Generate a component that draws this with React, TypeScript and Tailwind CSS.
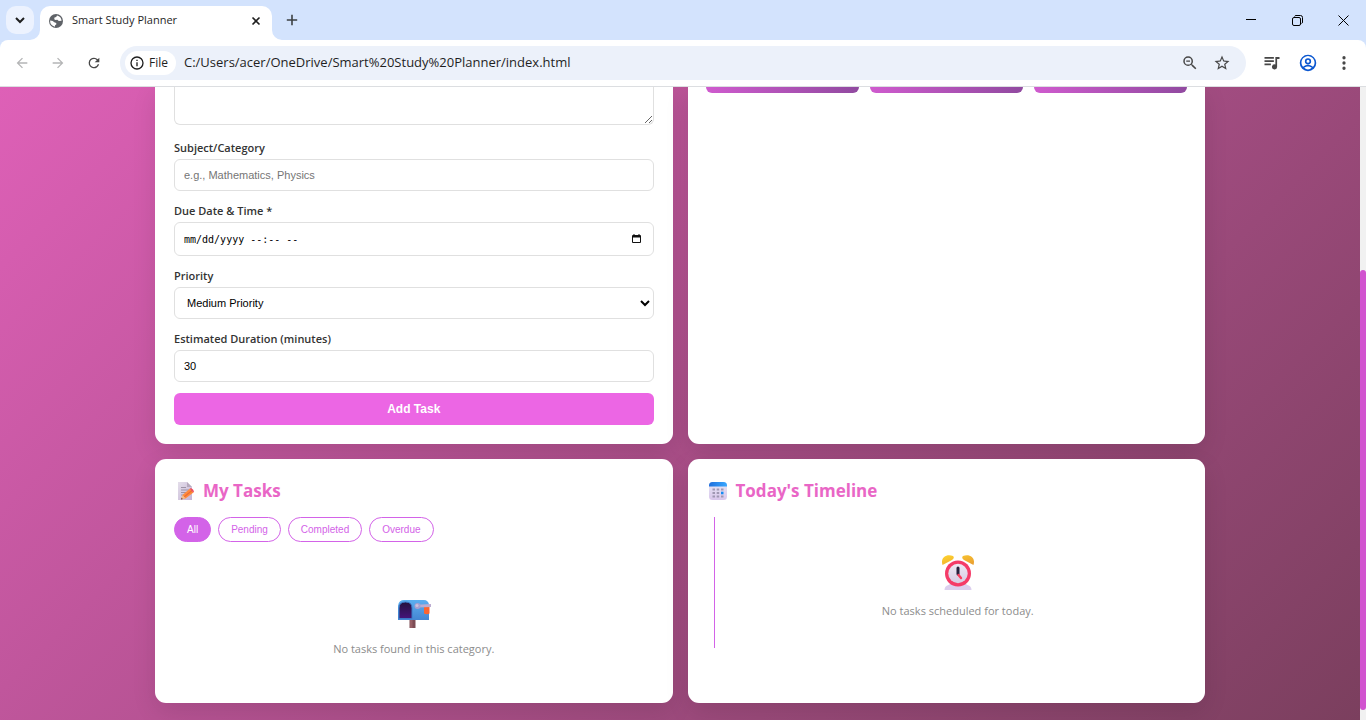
import React, { useState } from "react";

type IconProps = { d: string; size?: string; className?: string };

function MaterialIcon({ d, size = "size-4", className = "" }: IconProps) {
  return (
    <svg viewBox="0 0 24 24" className={`${size} ${className}`} fill="currentColor" aria-hidden="true">
      <path d={d} />
    </svg>
  );
}

const icons = {
  back: "M20 11H7.83l5.59-5.59L12 4l-8 8 8 8 1.41-1.41L7.83 13H20v-2z",
  forward: "M12 4l-1.41 1.41L16.17 11H4v2h12.17l-5.58 5.59L12 20l8-8z",
  reload:
    "M17.65 6.35A7.96 7.96 0 0 0 12 4a8 8 0 1 0 7.73 10h-2.08A6 6 0 1 1 12 6c1.66 0 3.14.69 4.22 1.78L13 11h7V4l-2.35 2.35z",
  info: "M11 7h2v2h-2zm0 4h2v6h-2zm1-9a10 10 0 1 0 0 20 10 10 0 0 0 0-20zm0 18a8 8 0 1 1 0-16 8 8 0 0 1 0 16z",
  zoomOut:
    "M15.5 14h-.79l-.28-.27A6.47 6.47 0 0 0 16 9.5 6.5 6.5 0 1 0 9.5 16c1.61 0 3.09-.59 4.23-1.57l.27.28v.79l5 4.99L20.49 19l-4.99-5zm-6 0a4.5 4.5 0 1 1 0-9 4.5 4.5 0 0 1 0 9zM7 8.6h5v1.8H7z",
  star: "M22 9.24l-7.19-.62L12 2 9.19 8.63 2 9.24l5.46 4.73L5.82 21 12 17.27 18.18 21l-1.63-7.03L22 9.24zM12 15.4l-3.76 2.27 1-4.28-3.32-2.88 4.38-.38L12 6.1l1.71 4.04 4.38.38-3.32 2.88 1 4.28L12 15.4z",
  queue:
    "M14.5 4H2v2.2h12.5V4zm0 4.4H2v2.2h12.5V8.400zM2 15h8.500v-2.200H2V15zM16.500 4v9.900A3.400 3.400 0 1 0 18.800 17V6.500H22V4h-5.500z",
  account:
    "M12 1a11 11 0 1 0 0 22 11 11 0 0 0 0-22zM7.100 18.400c.4-.9 3-1.800 4.900-1.800s4.500.9 4.900 1.800A8.500 8.500 0 0 1 12 20.600a8.500 8.500 0 0 1-4.900-2.200zm11.500-1.300c-1.600-1.900-5.100-2.800-6.600-2.800s-5 .9-6.600 2.800A8.700 8.700 0 1 1 20.700 12c0 1.900-.8 3.700-2.100 5.100zM12 5.500a4.200 4.200 0 1 0 0 8.400 4.200 4.200 0 0 0 0-8.400zm0 6.200a2 2 0 1 1 0-4 2 2 0 0 1 0 4z",
  dots: "M12 7.200a2.200 2.200 0 1 0 0-4.400 2.200 2.200 0 0 0 0 4.400zm0 2.600a2.200 2.200 0 1 0 0 4.400 2.200 2.200 0 0 0 0-4.400zm0 7a2.200 2.200 0 1 0 0 4.400 2.200 2.200 0 0 0 0-4.400z",
};

function Globe() {
  return (
    <svg viewBox="0 0 16 16" className="size-4" aria-hidden="true">
      <circle cx="8" cy="8" r="7" fill="#5f6368" />
      <path
        d="M9 2.4 8.2 4l-1.7.6-.3 1.600 1.300.7 1.800-.2 1.500 1.200 2.800-.1A6 6 0 0 0 9 2.4zM2.100 7.600l2.600.3 1.600 1.400 1.900.6.2 1.400-1.300.9-.2 1.500A6 6 0 0 1 2.100 7.600z"
        fill="#fff"
      />
    </svg>
  );
}

function BrowserChrome() {
  return (
    <header className="shrink-0 bg-[#d3e3fd] text-[#1f1f1f]">
      <div className="flex h-10 items-start">
        <button aria-label="Search tabs" className="ml-1.5 mt-1.5 grid size-7 place-items-center rounded-[10px] bg-[#ecf2fe]">
          <svg viewBox="0 0 10 10" className="size-2.5" fill="none" stroke="#1f1f1f" strokeWidth="2" aria-hidden="true">
            <path d="M1 3l4 4 4-4" />
          </svg>
        </button>
        <div className="relative ml-1.5 mt-1.5 flex h-[34px] w-[232px] items-center rounded-t-[10px] bg-white pb-[5px] pl-2 pr-2">
          <Globe />
          <span className="ml-2 flex-1 whitespace-nowrap text-[11px]">Smart Study Planner</span>
          <button aria-label="Close tab" className="grid size-4 place-items-center">
            <svg viewBox="0 0 10 10" className="size-2.5" stroke="#1f1f1f" strokeWidth="1.6" aria-hidden="true">
              <path d="M1.500 1.500l7 7m0-7l-7 7" />
            </svg>
          </button>
          <svg viewBox="0 0 10 10" className="absolute -left-2.5 bottom-0 size-2.5" fill="#fff" aria-hidden="true">
            <path d="M10 0v10H0A10 10 0 0 0 10 0z" />
          </svg>
          <svg viewBox="0 0 10 10" className="absolute -right-2.5 bottom-0 size-2.5" fill="#fff" aria-hidden="true">
            <path d="M0 0v10h10A10 10 0 0 1 0 0z" />
          </svg>
        </div>
        <button aria-label="New tab" className="ml-3 mt-3 grid size-4 place-items-center">
          <svg viewBox="0 0 12 12" className="size-3" stroke="#3c4043" strokeWidth="1.6" aria-hidden="true">
            <path d="M6 .8v10.4M.8 6h10.4" />
          </svg>
        </button>
        <div className="ml-auto flex h-10 text-black">
          <button aria-label="Minimize" className="grid w-[46px] place-items-center">
            <svg viewBox="0 0 10 10" className="size-2.5" stroke="currentColor" aria-hidden="true">
              <path d="M0 4.500h10" />
            </svg>
          </button>
          <button aria-label="Restore" className="grid w-[46px] place-items-center">
            <svg viewBox="0 0 11 11" className="size-[11px]" fill="none" stroke="currentColor" aria-hidden="true">
              <rect x=".5" y="2.5" width="8" height="8" rx="1.5" />
              <path d="M2.500 1.500q.4-1 1.500-1h4.500a2 2 0 0 1 2 2V7q0 1.200-1 1.500" />
            </svg>
          </button>
          <button aria-label="Close" className="grid w-[46px] place-items-center">
            <svg viewBox="0 0 11 11" className="size-[11px]" stroke="currentColor" aria-hidden="true">
              <path d="M.5.5l10 10m0-10l-10 10" />
            </svg>
          </button>
        </div>
      </div>
      <div className="flex h-[47px] items-center rounded-t-lg border-b border-[#dcdee1] bg-white pl-3.5 pr-[13px] text-[#474747]">
        <button aria-label="Back" className="text-[#b4b5b6]"><MaterialIcon d={icons.back} /></button>
        <button aria-label="Forward" className="ml-5 text-[#b4b5b6]"><MaterialIcon d={icons.forward} /></button>
        <button aria-label="Reload" className="ml-5"><MaterialIcon d={icons.reload} /></button>
        <div className="ml-[18px] flex h-[34px] flex-1 items-center rounded-full bg-[#ecf1fa] pl-[5px] pr-[15px]">
          <span className="flex h-6 items-center gap-1 rounded-full bg-white pl-1 pr-2 text-xs font-medium text-[#1f1f1f]">
            <MaterialIcon d={icons.info} />
            File
          </span>
          <input
            aria-label="Address"
            readOnly
            defaultValue="C:/Users/acer/OneDrive/Smart%20Study%20Planner/index.html"
            className="ml-2 min-w-0 flex-1 bg-transparent text-[13px] text-[#1f1f1f] outline-none"
          />
          <button aria-label="Zoom"><MaterialIcon d={icons.zoomOut} size="size-[18px]" /></button>
          <button aria-label="Bookmark" className="ml-3.5"><MaterialIcon d={icons.star} size="size-[18px]" /></button>
        </div>
        <button aria-label="Media" className="ml-[17px]"><MaterialIcon d={icons.queue} size="size-[18px]" /></button>
        <button aria-label="Profile" className="ml-[18px] text-[#0b57d0]"><MaterialIcon d={icons.account} size="size-[18px]" /></button>
        <button aria-label="Menu" className="ml-[18px]"><MaterialIcon d={icons.dots} size="size-[18px]" /></button>
      </div>
    </header>
  );
}

function NoteIcon() {
  return (
    <svg viewBox="0 0 20 20" className="size-5" aria-hidden="true">
      <defs>
        <linearGradient id="paper" x1="0" y1="0" x2="1" y2="1">
          <stop stopColor="#e4deea" />
          <stop offset="1" stopColor="#c5b4d6" />
        </linearGradient>
      </defs>
      <path d="M3 1h9l5 5v13H3z" fill="url(#paper)" />
      <path d="M12 1v5h5z" fill="#b6a9bd" />
      <path d="M6 6.500h5M6 9h8M6 11.500h6M6 14h3" stroke="#9d93a6" />
      <path d="M6 18.500l1.500-4.500 7.500-6.500 3.500 4-8 6z" fill="#ff8b3d" />
      <path d="M9 16l8-6.500" stroke="#ee6c31" strokeWidth="1.300" />
      <path d="M14.800 7.700l1.200-.7q2.500 1 3 3.500l-.8.9z" fill="#ed4c62" />
      <path d="M6 18.500l1.500-4.500 3 3.300z" fill="#f2bd8b" />
      <path d="M6 18.500l.6-1.700 1.200 1.200z" fill="#493a50" />
    </svg>
  );
}

function CalendarIcon() {
  return (
    <svg viewBox="0 0 20 20" className="size-5" aria-hidden="true">
      <defs>
        <linearGradient id="page" x1="0" y1="0" x2="0" y2="1">
          <stop stopColor="#e7e8f5" />
          <stop offset="1" stopColor="#d9c6ec" />
        </linearGradient>
        <linearGradient id="band">
          <stop stopColor="#1f6fdc" />
          <stop offset="1" stopColor="#38a8ff" />
        </linearGradient>
      </defs>
      <rect x="1" y="1" width="18" height="18" rx="3.500" fill="url(#page)" />
      <path d="M1 5.500v-1A3.500 3.500 0 0 1 4.500 1h11A3.500 3.500 0 0 1 19 4.500v1z" fill="url(#band)" />
      <path
        d="M4.500 7.500H7v2H4.500zm4.200 0h2.500v2H8.700zm4.300 0h2.500v2H13zM4.500 11H7v2H4.500zm4.200 0h2.500v2H8.700zM4.500 14.500H7v2H4.500zm4.200 0h2.500v2H8.700zm4.300 0h2.500v2H13z"
        fill="#a097b3"
      />
      <path d="M13 10.700h2.500v2.600H13z" fill="#168cf3" />
    </svg>
  );
}

function MailboxIcon() {
  return (
    <svg viewBox="0 0 34 30" className="h-[30px] w-[34px]" aria-hidden="true">
      <defs>
        <linearGradient id="box" x1="0" y1="0" x2="0" y2="1">
          <stop stopColor="#5caff0" />
          <stop offset="1" stopColor="#4485d2" />
        </linearGradient>
        <linearGradient id="hole" x1="0" y1="0" x2="0" y2="1">
          <stop stopColor="#24123f" />
          <stop offset="1" stopColor="#45157a" />
        </linearGradient>
      </defs>
      <path d="M12.500 19h6v11h-6z" fill="#7d4d55" />
      <path d="M13 19h2.500v11H13z" fill="#965f65" />
      <path d="M1 22V8a6 6 0 0 1 7-6h19a5 5 0 0 1 5 5v15z" fill="url(#box)" />
      <path d="M2 20.500V10q0-6 6.500-6T15 10v10.500z" fill="url(#hole)" stroke="#3b78c6" />
      <path d="M27 8h5.500v7.500q-2.700 1.500-5.500 0z" fill="#fc642f" />
      <path d="M20 6.800l14-.8v3l-14 .5z" fill="#bcadd1" />
      <circle cx="20.500" cy="8" r="3" fill="#a99fd0" />
      <circle cx="20" cy="7.500" r="1.500" fill="#cbc3dc" />
    </svg>
  );
}

function AlarmClockIcon() {
  return (
    <svg viewBox="0 0 34 38" className="h-[38px] w-[34px]" aria-hidden="true">
      <defs>
        <linearGradient id="bell" x1="0" y1="0" x2="1" y2="1">
          <stop stopColor="#ffd52e" />
          <stop offset="1" stopColor="#e89b32" />
        </linearGradient>
        <linearGradient id="face" x1="0" y1="0" x2="0" y2="1">
          <stop stopColor="#eee9f4" />
          <stop offset="1" stopColor="#d8cbe2" />
        </linearGradient>
      </defs>
      <path d="M3.500 37q0-4 4-5l3-2h13l3 2q4 1 4 5z" fill="#dccfee" />
      <path d="M1.500 12C-1 4 6 .5 12 3q2 2-1 4zM32.500 12C35 4 28 .5 22 3q-2 2 1 4z" fill="url(#bell)" />
      <circle cx="17" cy="20.500" r="13" fill="#f53b68" />
      <circle cx="17" cy="20.500" r="9.700" fill="url(#face)" />
      <path d="M17 15v6" stroke="#27213d" strokeWidth="3" strokeLinecap="round" />
      <path d="M17.500 22l2.500 3" stroke="#fa3f5e" strokeWidth="2.400" strokeLinecap="round" />
    </svg>
  );
}

const labelClass = "block text-[11px] font-semibold leading-[18px] text-[#333]";
const fieldClass =
  "mt-0.5 block h-8 w-full rounded-md border border-[#e0e0e0] bg-white px-[9px] font-['Liberation_Sans',sans-serif] text-[11px] text-black placeholder:text-[#757575]";

function DueDateField() {
  const [editing, setEditing] = useState(false);
  return (
    <div className="mt-0.5 flex h-[34px] items-center rounded-md border border-[#e0e0e0] bg-white pl-[9px] pr-3">
      <input
        id="due"
        type={editing ? "datetime-local" : "text"}
        placeholder="mm/dd/yyyy --:-- --"
        onFocus={() => setEditing(true)}
        className="min-w-0 flex-1 bg-transparent font-['DejaVu_Sans_Mono',monospace] text-[10px] text-black outline-none placeholder:text-black"
      />
      <button type="button" aria-label="Choose date" onClick={() => setEditing(true)}>
        <svg viewBox="0 0 9 10" className="h-2.5 w-[9px]" aria-hidden="true">
          <path d="M1.500 0h1v1h4V0h1v1H8q1 0 1 1v6q0 1-1 1H1Q0 9 0 8V2q0-1 1-1h.5zM1 3.500V8h7V3.500z" fill="#111" fillRule="evenodd" />
        </svg>
      </button>
    </div>
  );
}

function TaskForm() {
  return (
    <form className="rounded-b-[11px] bg-white px-[19px] pb-[19px] shadow-[0_8px_24px_rgba(0,0,0,0.1)]">
      <textarea
        aria-label="Description"
        className="block h-[38px] w-full rounded-b-md border border-t-0 border-[#e0e0e0]"
      />
      <div className="mt-3.5">
        <label htmlFor="subject" className={labelClass}>Subject/Category</label>
        <input id="subject" placeholder="e.g., Mathematics, Physics" className={fieldClass} />
      </div>
      <div className="mt-[11px]">
        <label htmlFor="due" className={labelClass}>Due Date &amp; Time *</label>
        <DueDateField />
      </div>
      <div className="mt-[11px]">
        <label htmlFor="priority" className={labelClass}>Priority</label>
        <select id="priority" defaultValue="medium" className={`${fieldClass} pl-2 pr-0`}>
          <option value="low">Low Priority</option>
          <option value="medium">Medium Priority</option>
          <option value="high">High Priority</option>
        </select>
      </div>
      <div className="mt-[11px]">
        <label htmlFor="duration" className={labelClass}>Estimated Duration (minutes)</label>
        <input id="duration" type="number" defaultValue={30} className={fieldClass} />
      </div>
      <button
        type="button"
        className="mt-[11px] block h-8 w-full rounded-md bg-[#ec66e4] font-['Liberation_Sans',sans-serif] text-xs font-bold text-white"
      >
        Add Task
      </button>
    </form>
  );
}

function PanelTitle({ icon, children }: { icon: React.ReactNode; children: React.ReactNode }) {
  return (
    <h2 className="flex h-[25px] items-center gap-2 pl-px text-[17px] font-bold text-[#e966c6]">
      {icon}
      {children}
    </h2>
  );
}

const cardClass = "rounded-[11px] bg-white px-[19px] pt-[19px] shadow-[0_8px_24px_rgba(0,0,0,0.1)]";
const filters = ["All", "Pending", "Completed", "Overdue"];

export default function App() {
  return (
    <div className="flex h-screen flex-col overflow-hidden font-['Open_Sans','Noto_Sans',sans-serif]">
      <BrowserChrome />
      <div className="flex min-h-0 flex-1">
        <main className="min-w-0 flex-1 overflow-hidden bg-[linear-gradient(135deg,#de60b7_0%,#7b3f5e_100%)]">
          <div className="mx-auto grid max-w-[1050px] grid-cols-2 gap-[15px]">
            <TaskForm />
            <section aria-label="Statistics" className="rounded-b-[11px] bg-white px-[18px] shadow-[0_8px_24px_rgba(0,0,0,0.1)]">
              <div className="grid grid-cols-3 gap-[11px]">
                <div className="h-1.5 rounded-b-lg bg-[linear-gradient(90deg,#cf5bce,#914aa0)]" />
                <div className="h-1.5 rounded-b-lg bg-[linear-gradient(90deg,#cf5bce,#914aa0)]" />
                <div className="h-1.5 rounded-b-lg bg-[linear-gradient(90deg,#cf5bce,#914aa0)]" />
              </div>
            </section>
            <section className={`${cardClass} pb-[45px]`}>
              <PanelTitle icon={<NoteIcon />}>My Tasks</PanelTitle>
              <div className="mt-3.5 flex gap-[7px]">
                {filters.map((name, i) => (
                  <button
                    key={name}
                    className={`h-[25px] rounded-full border border-[#d363e8] px-3 font-['Liberation_Sans',sans-serif] text-[10px] ${
                      i === 0 ? "bg-[#d363e8] text-white" : "bg-white text-[#d363e8]"
                    }`}
                  >
                    {name}
                  </button>
                ))}
              </div>
              <div className="mt-14 flex flex-col items-center">
                <MailboxIcon />
                <p className="mt-3 text-[11px] leading-[18px] text-[#8c8c8c]">No tasks found in this category.</p>
              </div>
            </section>
            <section className={`${cardClass} pb-[45px]`}>
              <PanelTitle icon={<CalendarIcon />}>Today's Timeline</PanelTitle>
              <div className="ml-[7px] mt-3.5 flex h-[131px] flex-col items-center border-l border-[#d363e8] pl-[15px] pt-9">
                <AlarmClockIcon />
                <p className="mt-[11px] text-[11px] leading-[18px] text-[#8c8c8c]">No tasks scheduled for today.</p>
              </div>
            </section>
          </div>
        </main>
        <div className="flex w-1.5 shrink-0 flex-col justify-end bg-[#f1f1f1] pb-2.5">
          <div className="h-[440px] rounded-full bg-[#d153cf]" />
        </div>
      </div>
    </div>
  );
}
